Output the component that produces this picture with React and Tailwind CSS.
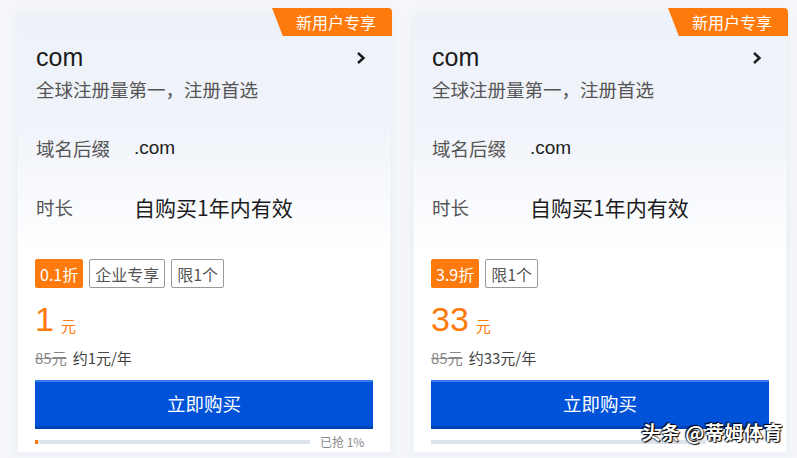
import React from "react";

const cards = [
  { discount: "0.1折", tags: ["企业专享", "限1个"], price: "1", perYear: "约1元/年", sold: "已抢 1%", progress: 1 },
  { discount: "3.9折", tags: ["限1个"], price: "33", perYear: "约33元/年", sold: "", progress: 0 },
];

function Chevron() {
  return (
    <svg width="10" height="14" viewBox="0 0 10 14" className="mt-[2px]">
      <polyline points="2,2 7.5,7 2,12" fill="none" stroke="#1a1a1a" strokeWidth="2.4" />
    </svg>
  );
}

function Card({ card }) {
  return (
    <div className="relative w-[374px] h-[439px] bg-white border border-[#f4f6fa] shadow-[0_0_6px_rgba(180,190,210,0.25)] flex flex-col">
      {/* badge */}
      <div className="absolute -top-[7px] -right-[2px] w-[120px] h-[28px] bg-[#ff7a0c] rounded-tr-[4px] [clip-path:polygon(0_0,100%_0,100%_100%,9%_100%)] flex items-center justify-center pl-[8px] text-white text-[16px]">
        新用户专享
      </div>

      {/* top section */}
      <div className="h-[240px] bg-gradient-to-b from-[#edf1f9] via-[#f1f4fa] to-white px-[18px] pt-[28px]">
        <div className="flex items-center justify-between pr-[6px]">
          <span className="text-[25px] leading-[28px] text-[#1c1c1c] font-['Liberation_Sans','Noto_Sans_CJK_SC',sans-serif]">com</span>
          <Chevron />
        </div>
        <div className="mt-[6px] text-[18.5px] leading-[24px] text-[#555]">全球注册量第一，注册首选</div>
        <div className="mt-[35px] flex text-[18.5px] leading-[24px]">
          <span className="w-[98px] text-[#555]">域名后缀</span>
          <span className="text-[#222] font-['Liberation_Sans','Noto_Sans_CJK_SC',sans-serif] text-[19px]">.com</span>
        </div>
        <div className="mt-[35px] flex text-[18.5px] leading-[24px]">
          <span className="w-[98px] text-[#555]">时长</span>
          <span className="text-[#1c1c1c] text-[21px]">自购买1年内有效</span>
        </div>
      </div>

      {/* bottom section */}
      <div className="px-[17px] pt-[4px] flex flex-col">
        <div className="flex gap-[6px]">
          <span className="h-[29px] px-[5px] flex items-center bg-[#ff7a0c] rounded-[2px] text-white text-[16px]">{card.discount}</span>
          {card.tags.map(t => (
            <span key={t} className="h-[29px] px-[5px] flex items-center border border-[#999] rounded-[2px] text-[#555] text-[16px]">{t}</span>
          ))}
        </div>
        <div className="mt-[13px] flex items-end h-[36px] text-[#ff7a0c]">
          <span className="text-[34px] leading-[36px] font-['Liberation_Sans',sans-serif]">{card.price}</span>
          <span className="ml-[7px] mb-[1px] text-[15px] leading-[20px]">元</span>
        </div>
        <div className="mt-[11px] flex items-center text-[15px] leading-[20px]">
          <span className="line-through text-[#888]">85元</span>
          <span className="ml-[6px] text-[#444]">{card.perYear}</span>
        </div>
        <button className="mt-[12px] h-[49px] w-full bg-[#0052d9] border-t-[2px] border-t-[#3a7bf0] border-b-[3px] border-b-[#0042b8] text-white text-[18.5px]">
          立即购买
        </button>
        <div className="mt-[6px] flex items-center h-[14px]">
          <div className="w-[275px] h-[4px] bg-[#dfe3ea] flex">
            {card.progress > 0 && <div className="w-[3px] h-full bg-[#ff7a0c]" />}
          </div>
          <span className="ml-[10px] text-[12px] text-[#888]">{card.sold}</span>
        </div>
      </div>
    </div>
  );
}

export default function App() {
  return (
    <div className="relative w-[797px] h-[458px] bg-[#f4f6fa] overflow-hidden font-['Noto_Sans_CJK_SC',sans-serif]">
      <div className="flex gap-[22px] pl-[17px] pt-[14px]">
        {cards.map((c, i) => (
          <Card key={i} card={c} />
        ))}
      </div>
      {/* watermark */}
      <div className="absolute right-[14px] bottom-[12px] text-white text-[19px] font-bold tracking-[0.5px] [text-shadow:0_0_2px_#000,1px_1px_1px_#000,-1px_-1px_1px_#000]">
        头条 @蒂姆体育
      </div>
    </div>
  );
}
